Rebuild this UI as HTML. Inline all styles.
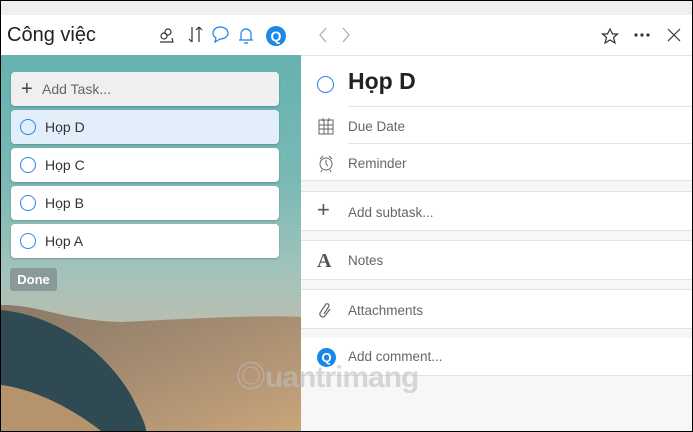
<!DOCTYPE html>
<html><head><meta charset="utf-8"><style>
*{margin:0;padding:0;box-sizing:border-box}
body{width:693px;height:432px;overflow:hidden;background:#000;font-family:"Liberation Sans","Noto Sans CJK SC",sans-serif;position:relative}
#top{position:absolute;left:1px;top:1px;width:691px;height:14px;background:#efefef}
#left{position:absolute;left:1px;top:15px;width:300px;height:416px;overflow:hidden;background:linear-gradient(180deg,#5fb0ae 0%,#7ab9b5 40%,#a2c3bc 62%,#b5bfb2 72%)}
#lh{position:absolute;left:0;top:0;width:300px;height:40px;background:#fff}
#lh .t{position:absolute;left:6px;top:9px;font-size:20px;color:#222}
.card{position:absolute;left:10px;width:268px;height:34px;background:#fff;border-radius:4px;font-size:14px;color:#333;box-shadow:0 1px 2px rgba(0,0,0,.2)}
.card .c{position:absolute;left:9px;top:9px;width:16px;height:16px;border:1.5px solid #2a84e8;border-radius:50%}
.card span{position:absolute;left:34px;top:9px}
#right{position:absolute;left:301px;top:15px;width:391px;height:416px;background:#f7f7f7}
.row{position:absolute;left:0;width:391px;background:#fff}
.lbl{position:absolute;left:47px;font-size:13.5px;color:#666}
.ln{position:absolute;left:47px;right:0;height:1px;background:#e2e2e2}
.bl{position:absolute;left:0;right:0;height:1px;background:#e2e2e2}
</style></head><body>
<div id="top"></div>
<div id="left">
<svg width="300" height="416" style="position:absolute;left:0;top:0">
<defs><linearGradient id="s" x1="0" y1="0" x2="1" y2="1"><stop offset="0" stop-color="#8a7868"/><stop offset=".5" stop-color="#a68d72"/><stop offset="1" stop-color="#c9a57a"/></linearGradient></defs>
<path d="M0 290 C40 290 60 305 120 307 C200 303 260 300 300 302 L300 416 L0 416Z" fill="url(#s)"/>
<path d="M0 295 C50 300 100 330 130 380 C140 400 145 410 145 416 L0 416Z" fill="#2f4a52"/>
<path d="M0 370 C40 375 80 400 100 416 L0 416Z" fill="#c49c70" opacity=".9"/>
</svg>
<div id="lh"><div class="t">Công việc</div>
<svg width="135" height="26" style="position:absolute;left:158px;top:8px" fill="none" stroke="#333" stroke-width="1.2">
<circle cx="9" cy="9" r="3"/><circle cx="5" cy="13" r="3"/><path d="M1 19h13l-1-4"/>
<path d="M33 4v15M30 16l3 3M40 19V4M37 7l3-3M43 7l-3-3"/>
<path stroke="#1a7fe8" d="M61 4c5 0 8 3 8 6s-3 6-8 6l-5 3 1-4c-2-1-3-3-3-5 0-3 3-6 7-6z"/>
<path stroke="#1a7fe8" d="M80 17h14M82 17v-6a5 5 0 0110 0v6M85 20h4"/>
<circle cx="117" cy="13" r="10" fill="#1a88e8" stroke="none"/>
<text x="117" y="18" fill="#fff" stroke="none" font-size="14" font-weight="bold" text-anchor="middle" font-family="Liberation Sans">Q</text>
</svg></div>
<div class="card" style="top:57px;background:#efefef;color:#666"><span style="left:10px;top:6px;font-size:20px;color:#444">+</span><span style="left:31px">Add Task...</span></div>
<div class="card" style="top:95px;background:#e3eefb"><div class="c"></div><span>Họp D</span></div>
<div class="card" style="top:133px"><div class="c"></div><span>Họp C</span></div>
<div class="card" style="top:171px"><div class="c"></div><span>Họp B</span></div>
<div class="card" style="top:209px"><div class="c"></div><span>Họp A</span></div>
<div style="position:absolute;left:9px;top:253px;width:47px;height:23px;background:#8a9a98;border-radius:3px;color:#fff;font-weight:bold;font-size:13px;text-align:center;line-height:23px">Done</div>
</div>
<div id="right">
<div class="row" style="top:0;height:40px"></div>
<svg width="391" height="40" style="position:absolute;left:0;top:0" fill="none" stroke-width="1.2">
<path d="M25 13l-6 7 6 7" stroke="#aaa"/><path d="M42 13l6 7-6 7" stroke="#aaa"/>
<path d="M309 14l2.5 5h5l-4 3.5 1.5 5.5-5-3-5 3 1.5-5.5-4-3.5h5z" stroke="#333"/>
<circle cx="335" cy="20" r="1.6" fill="#333" stroke="none"/><circle cx="341" cy="20" r="1.6" fill="#333" stroke="none"/><circle cx="347" cy="20" r="1.6" fill="#333" stroke="none"/>
<path d="M367 14l12 12M379 14l-12 12" stroke="#333"/>
</svg>
<div class="bl" style="top:40px"></div>
<div class="row" style="top:41px;height:125px"></div>
<div style="position:absolute;left:16px;top:61px;width:17px;height:17px;border:1.5px solid #2a84e8;border-radius:50%"></div>
<div style="position:absolute;left:47px;top:53px;font-size:23px;font-weight:bold;color:#222">Họp D</div>
<div class="ln" style="top:91px"></div>
<svg width="20" height="20" style="position:absolute;left:16px;top:102px" fill="none" stroke="#666" stroke-width="1"><rect x="2" y="3" width="14" height="14"/><path d="M2 8h14M2 12h14M7 3v14M11 3v14M6 1v3M12 1v3"/></svg>
<div class="lbl" style="top:104px">Due Date</div>
<div class="ln" style="top:128px"></div>
<svg width="20" height="20" style="position:absolute;left:16px;top:139px" fill="none" stroke="#666" stroke-width="1"><circle cx="9" cy="10" r="6"/><path d="M9 6v4l2 2M3 5l3-3M15 5l-3-3M5 16l-1 2M13 16l1 2"/></svg>
<div class="lbl" style="top:141px">Reminder</div>
<div class="bl" style="top:165px"></div>
<div class="bl" style="top:176px"></div>
<div class="row" style="top:177px;height:38px"></div>
<div style="position:absolute;left:16px;top:185px;font-size:22px;color:#555;line-height:20px">+</div>
<div class="lbl" style="top:190px">Add subtask...</div>
<div class="bl" style="top:215px"></div>
<div class="bl" style="top:225px"></div>
<div class="row" style="top:226px;height:38px"></div>
<div style="position:absolute;left:16px;top:235px;font-family:'Liberation Serif',serif;font-weight:bold;font-size:20px;color:#555">A</div>
<div class="lbl" style="top:238px">Notes</div>
<div class="bl" style="top:264px"></div>
<div class="bl" style="top:274px"></div>
<div class="row" style="top:275px;height:38px"></div>
<svg width="20" height="22" style="position:absolute;left:16px;top:284px" fill="none" stroke="#666" stroke-width="1.2"><path d="M13 10l-5 7a3 3 0 01-5-3l6-9a2 2 0 013 2l-5 8"/></svg>
<div class="lbl" style="top:288px">Attachments</div>
<div class="bl" style="top:313px"></div>
<div class="row" style="top:323px;height:37px"></div>
<div style="position:absolute;left:16px;top:333px;width:19px;height:19px;border-radius:50%;background:#1a88e8;color:#fff;font-weight:bold;font-size:13px;text-align:center;line-height:19px">Q</div>
<div class="lbl" style="top:334px">Add comment...</div>
<div class="bl" style="top:360px"></div>
</div>
<div style="position:absolute;left:236px;top:352px;font-size:30px;color:rgba(190,190,190,.6);font-weight:bold;letter-spacing:-1px">◎uantrimang</div>
</body></html>
